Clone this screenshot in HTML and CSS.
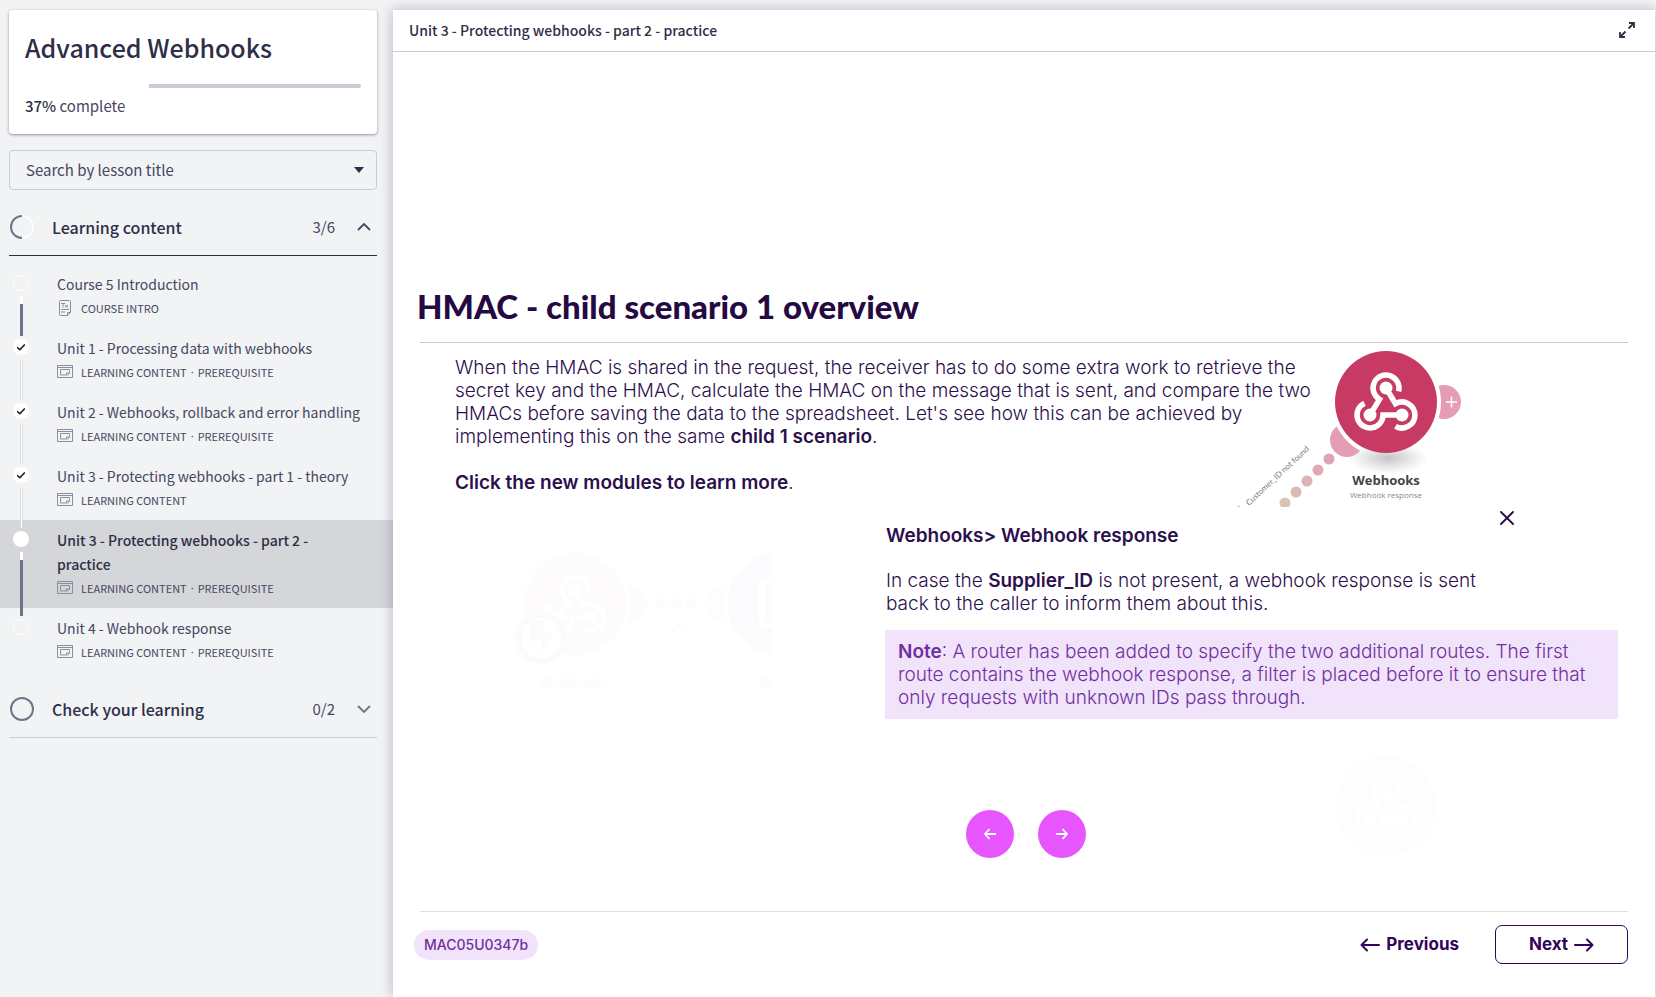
FILE: index.html
```html
<!DOCTYPE html>
<html lang="en">
<head>
<meta charset="utf-8">
<title>Advanced Webhooks</title>
<link rel="stylesheet" href="styles.css">
</head>
<body>
<svg class="defs" aria-hidden="true">
  <symbol id="lesson" viewBox="0 0 16 14">
    <path d="M.5 .5h15v12h-15zM.5 2.500h15M3.500 4.500h9v3.500l-2 2h-7zM9.500 9.500v-1.500h3" fill="none" stroke="currentColor"/>
  </symbol>
  <symbol id="check" viewBox="0 0 16 16">
    <path d="M4.200 8.200l2.600 2.500 5-5.200" fill="none" stroke="#14141f" stroke-width="1.500"/>
  </symbol>
  <symbol id="hook" viewBox="0 0 102 102">
    <g fill="none" stroke="#fff" stroke-width="5.500">
      <path d="M63.600 40.400A13 13 0 1 0 44.500 48.300L35 64"/>
      <path d="M29.500 52.200A13 13 0 1 0 48 64H67"/>
      <path d="M60.500 75.300A13 13 0 1 0 60.500 52.700L51 37"/>
    </g>
    <g fill="#fff"><circle cx="51" cy="37" r="6.500"/><circle cx="35" cy="64" r="6.500"/><circle cx="67" cy="64" r="6.500"/></g>
  </symbol>
</svg>
<aside class="sidebar">
  <section class="card course">
    <h2 class="course-title">Advanced Webhooks</h2>
    <div class="bar" role="progressbar" aria-label="Course progress" aria-valuenow="37"><div class="bar-rest" style="width:63%"></div></div>
    <p class="percent"><b>37%</b> complete</p>
  </section>
  <div class="search">
    <select class="search-box" aria-label="Search by lesson title"><option>Search by lesson title</option></select>
    <svg class="caret" viewBox="0 0 10 6" aria-hidden="true"><path d="M0 0h10L5 6z" fill="#2d2f48"/></svg>
  </div>
  <button class="section open" type="button" aria-expanded="true">
    <svg class="ring" viewBox="0 0 24 24"><circle cx="12" cy="12" r="11" fill="none" stroke="#fff" stroke-width="1.500"/><path d="M12 1a11 11 0 0 0 0 22" fill="none" stroke="#70738a" stroke-width="2"/></svg>
    <span class="section-name">Learning content</span><span class="count">3/6</span>
    <svg class="chevron" viewBox="0 0 14 8"><path d="M1 7l6-6 6 6" fill="none" stroke="#45475f" stroke-width="1.800"/></svg>
  </button>
  <ol class="lessons">
    <li class="lesson pending">
      <div class="track"><span class="dot"></span><span class="link part"></span></div>
      <a class="lesson-link" href="#intro"><span class="name">Course 5 Introduction</span>
      <span class="meta"><svg class="icon" viewBox="0 0 16 16"><path d="M3.500.5h9a1 1 0 0 1 1 1v11l-3 3h-7a1 1 0 0 1-1-1v-13a1 1 0 0 1 1-1zM13.500 12.500h-3v3M4 3.500h4M6 3.500v4M8 5l3 2.500M11 5L8 7.500M4 9.500h8M4 12h4" fill="none" stroke="currentColor"/></svg>COURSE INTRO</span></a>
    </li>
    <li class="lesson">
      <div class="track"><span class="dot"><svg class="tick"><use href="#check"/></svg></span><span class="link"></span></div>
      <a class="lesson-link" href="#unit1"><span class="name">Unit 1 - Processing data with webhooks</span>
      <span class="meta"><svg class="icon"><use href="#lesson"/></svg>LEARNING CONTENT<span class="sep">·</span>PREREQUISITE</span></a>
    </li>
    <li class="lesson">
      <div class="track"><span class="dot"><svg class="tick"><use href="#check"/></svg></span><span class="link"></span></div>
      <a class="lesson-link" href="#unit2"><span class="name">Unit 2 - Webhooks, rollback and error handling</span>
      <span class="meta"><svg class="icon"><use href="#lesson"/></svg>LEARNING CONTENT<span class="sep">·</span>PREREQUISITE</span></a>
    </li>
    <li class="lesson">
      <div class="track"><span class="dot"><svg class="tick"><use href="#check"/></svg></span><span class="link"></span></div>
      <a class="lesson-link" href="#unit3a"><span class="name">Unit 3 - Protecting webhooks - part 1 - theory</span>
      <span class="meta"><svg class="icon"><use href="#lesson"/></svg>LEARNING CONTENT</span></a>
    </li>
    <li class="lesson current">
      <div class="track"><span class="dot"></span><span class="link part"></span></div>
      <a class="lesson-link" href="#unit3b" aria-current="page"><span class="name">Unit 3 - Protecting webhooks - part 2 -<br>practice</span>
      <span class="meta"><svg class="icon"><use href="#lesson"/></svg>LEARNING CONTENT<span class="sep">·</span>PREREQUISITE</span></a>
    </li>
    <li class="lesson pending">
      <div class="track"><span class="dot"></span></div>
      <a class="lesson-link" href="#unit4"><span class="name">Unit 4 - Webhook response</span>
      <span class="meta"><svg class="icon"><use href="#lesson"/></svg>LEARNING CONTENT<span class="sep">·</span>PREREQUISITE</span></a>
    </li>
  </ol>
  <button class="section" type="button" aria-expanded="false">
    <svg class="ring" viewBox="0 0 24 24"><circle cx="12" cy="12" r="11" fill="none" stroke="#70738a" stroke-width="2"/></svg>
    <span class="section-name">Check your learning</span><span class="count">0/2</span>
    <svg class="chevron" viewBox="0 0 14 8"><path d="M1 1l6 6 6-6" fill="none" stroke="#70738a" stroke-width="1.800"/></svg>
  </button>
</aside>
<main class="player">
  <header class="topbar">
    <h2 class="unit">Unit 3 - Protecting webhooks - part 2 - practice</h2>
    <button class="expand" type="button" aria-label="Full screen"><svg viewBox="0 0 16 16"><path d="M9.500 6.500L15 1M10 1h5v5M6.500 9.500L1 15M1 10v5h5" fill="none" stroke="#2d2f48" stroke-width="1.800"/></svg></button>
  </header>
  <article class="slide">
    <h1 class="slide-title">HMAC - child scenario 1 overview</h1>
    <div class="stage">
      <div class="intro">
        <p>When the HMAC is shared in the request, the receiver has to do some extra work to retrieve the<br>secret key and the HMAC, calculate the HMAC on the message that is sent, and compare the two<br>HMACs before saving the data to the spreadsheet. Let's see how this can be achieved by<br>implementing this on the same <b>child 1 scenario</b>.</p>
        <p><b>Click the new modules to learn more</b>.</p>
      </div>
      <svg class="module" viewBox="0 0 230 164">
        <defs><radialGradient id="shade"><stop offset="0" stop-color="#c4c4c4"/><stop offset="1" stop-color="#ccc" stop-opacity="0"/></radialGradient></defs>
        <circle cx="209" cy="59" r="17" fill="#e59db3"/>
        <circle cx="112" cy="97" r="17" fill="#e59db3"/>
        <circle cx="151" cy="59" r="55" fill="#fff"/>
        <ellipse cx="153" cy="115" rx="40" ry="16" fill="url(#shade)"/>
        <circle cx="151" cy="59" r="51" fill="#c73a63"/>
        <use href="#hook" x="100" y="8" width="102" height="102"/>
        <path d="M211 59h11M216.500 53.500v11" stroke="#fff" stroke-width="1.500"/>
        <circle cx="94" cy="116" r="5.500" fill="#e0a3b3"/><circle cx="83" cy="127" r="5.500" fill="#dfaab4"/><circle cx="72" cy="138" r="5.500" fill="#ddb2b5"/><circle cx="61" cy="149" r="5.500" fill="#dbbab4"/><circle cx="50" cy="160" r="5.500" fill="#d8c4b4"/>
        <text class="filter-label" transform="translate(14 163) rotate(-43)">Customer_ID not found</text>
        <path d="M2 164l2-2 1 2z" fill="#c9cf9a"/>
        <text class="module-name" x="151" y="142">Webhooks</text>
        <text class="module-kind" x="151" y="155">Webhook response</text>
      </svg>
    </div>
    <div class="detail">
      <svg class="ghost" viewBox="0 0 262 160" aria-hidden="true">
        <circle cx="120" cy="55" r="17" fill="#fcfcfc"/><circle cx="212" cy="55" r="17" fill="#fdfdfd"/>
        <circle cx="65" cy="55" r="55" fill="#fff"/><circle cx="65" cy="55" r="51" fill="#fefbfc"/>
        <use href="#hook" x="14" y="4" width="102" height="102"/>
        <circle cx="31" cy="89" r="26" fill="#fdfafb"/><circle cx="31" cy="89" r="20" fill="#fff"/><path d="M22 71h14l-4 12h12L30 105l2-13H19z" fill="#fdfafb"/>
        <g fill="#fcfcfc"><circle cx="151" cy="54" r="5"/><circle cx="167" cy="54" r="5"/><circle cx="182" cy="54" r="5"/></g>
        <path d="M162 82l6-6a4 4 0 0 1 4-4l-1 4 4 1a4 4 0 0 1-5 2l-6 5z" fill="#fcfcfc"/>
        <circle cx="269" cy="55" r="55" fill="#fff"/><circle cx="269" cy="55" r="51" fill="#fbfbfe"/>
        <path d="M262 32h-6q-4 0-4 4v36q0 4 4 4h6" fill="none" stroke="#fff" stroke-width="6"/>
        <text class="ghost-name" x="98" y="138">Webhooks</text><text class="ghost-name" x="261" y="138">JS</text>
      </svg>
      <section class="panel">
        <div class="panel-head">
          <h3 class="panel-title">Webhooks&gt; Webhook response</h3>
          <button class="close" type="button" aria-label="Close"><svg viewBox="0 0 14 14"><path d="M1 1l12 12M13 1L1 13" stroke="#240942" stroke-width="1.800" stroke-linecap="round"/></svg></button>
        </div>
        <p class="panel-text">In case the <b>Supplier_ID</b> is not present, a webhook response is sent<br>back to the caller to inform them about this.</p>
        <p class="note"><b>Note</b>: A router has been added to specify the two additional routes. The first<br>route contains the webhook response, a filter is placed before it to ensure that<br>only requests with unknown IDs pass through.</p>
        <div class="steps">
          <button class="step" type="button" aria-label="Back"><svg viewBox="0 0 12 12"><path d="M12 6H1M5.500 1L1 6l4.500 5" fill="none" stroke="#fff" stroke-width="1.800"/></svg></button>
          <button class="step" type="button" aria-label="Forward"><svg viewBox="0 0 12 12"><path d="M0 6h11M6.500 1L11 6l-4.500 5" fill="none" stroke="#fff" stroke-width="1.800"/></svg></button>
          <svg class="ghost-node" viewBox="0 0 102 102" aria-hidden="true"><circle cx="51" cy="51" r="50" fill="#fdfdfd"/><use href="#hook" width="102" height="102"/></svg>
        </div>
      </section>
    </div>
    <footer class="footer">
      <span class="code">MAC05U0347b</span>
      <nav class="pager">
        <button class="prev" type="button"><svg viewBox="0 0 20 14"><path d="M19 7H1.500M7 1.500L1.500 7 7 12.500" fill="none" stroke="currentColor" stroke-width="2" stroke-linecap="round" stroke-linejoin="round"/></svg>Previous</button>
        <button class="next" type="button">Next<svg viewBox="0 0 20 14"><path d="M1 7h17.500M13 1.500L18.500 7 13 12.500" fill="none" stroke="currentColor" stroke-width="2" stroke-linecap="round" stroke-linejoin="round"/></svg></button>
      </nav>
    </footer>
  </article>
</main>
</body>
</html>
```

FILE: styles.css
```css
* { box-sizing: border-box; }
body {
  margin: 0;
  min-height: 100vh;
  display: flex;
  background: #f1f3f5;
  color: #2d2f48;
  font: 15px/24px "Noto Sans CJK SC", "Noto Sans", sans-serif;
}
h1, h2, h3, p, ol { margin: 0; padding: 0; }
button { padding: 0; border: 0; background: none; color: inherit; font: inherit; cursor: pointer; }
svg { display: block; flex: none; }
.defs { position: absolute; width: 0; height: 0; }

.sidebar { flex: none; width: 393px; padding-top: 10px; }
.card { margin: 0 16px 16px 9px; height: 124px; padding: 15px 16px; border-radius: 4px; background: #fff; box-shadow: 0 1px 3px #2d2f4880; }
.course-title { font-size: 25px; line-height: 44px; font-weight: 500; }
.bar { display: flex; justify-content: flex-end; height: 4px; margin: 15px 0 6px; }
.bar-rest { background: #c9ccd6; border-radius: 0 2px 2px 0; }
.percent { font-size: 15px; color: #45475f; }
.percent b { font-weight: 500; color: #2d2f48; }
.search { position: relative; margin: 0 16px 0 9px; }
.search-box { appearance: none; display: block; width: 100%; height: 40px; padding: 0 16px; border: 1px solid #c9ccd6; border-radius: 4px; background: none; color: #45475f; font: inherit; }
.caret { position: absolute; right: 13px; top: 17px; width: 10px; height: 6px; pointer-events: none; }

.section { display: flex; align-items: center; width: 368px; height: 58px; margin: 8px 16px 8px 9px; padding: 0 6px 0 1px; border-bottom: 1px solid #c9ccd6; text-align: left; }
.section.open { border-color: #2d2f48; }
.ring { width: 24px; height: 24px; margin-right: 18px; }
.section-name { flex: 1; font-size: 16px; font-weight: 500; }
.count { margin-right: 22px; font-size: 15px; color: #45475f; }
.chevron { width: 14px; height: 8px; }

.lessons { list-style: none; }
.lesson { display: flex; padding: 8px 16px 8px 13px; color: #45475f; }
.current { background: #d5d6da; }
.track { flex: none; display: flex; flex-direction: column; align-items: center; gap: 5px; width: 16px; margin: 3px 28px -16px 0; }
.dot { flex: none; width: 16px; height: 16px; border-radius: 50%; background: #fff; }
.pending .dot { background: none; border: 1px solid #fff; }
.tick { width: 16px; height: 16px; }
.link { flex: 1; width: 3px; background: #fff; border: solid #d8dadf; border-width: 0 1px; }
.link.part { border: 0; background: linear-gradient(#fff 8px, #70738a 8px); }
.lesson-link { flex: 1; min-width: 0; color: inherit; font-size: 14px; text-decoration: none; }
.name { display: block; }
.current .name { font-weight: 500; color: #2d2f48; }
.meta { display: flex; align-items: center; font-size: 11px; line-height: 24px; }
.sep { margin: 0 4px; font-family: "Noto Sans", sans-serif; }
.icon { width: 16px; height: 16px; margin-right: 8px; color: #8b8d9f; }

.player { flex: 1; min-width: 0; display: flex; flex-direction: column; margin: 10px 1px 0 0; background: #fff; box-shadow: 0 0 12px #2d2f4850; }
.topbar { display: flex; align-items: center; justify-content: space-between; height: 42px; padding: 0 20px 2px 16px; border-bottom: 1px solid #c9ccd6; }
.unit { font-size: 14px; line-height: 24px; font-weight: 500; }
.expand svg { width: 16px; height: 16px; }

.slide { flex: 1; display: flex; flex-direction: column; padding: 228px 27px 0 24px; color: #2c0f4d; font: 300 19px/23px Inter, sans-serif; }
.slide b { font-weight: 600; }
.slide-title { height: 62px; font: 900 33px/52px Lato, sans-serif; color: #240942; }
.stage { display: grid; grid-template-columns: 785px 90px 140px 1fr; margin-left: 3px; border-top: 1px solid #cfc6ca; }
.intro { grid-area: 1 / 1 / 2 / 3; display: flex; flex-direction: column; gap: 23px; padding: 13px 0 0 35px; white-space: nowrap; }
.module { grid-area: 1 / 2 / 2 / 4; width: 230px; height: 164px; margin-left: 30px; }
.filter-label { font: 8px Lato, sans-serif; fill: #777; }
.module-name { font: 700 13px "Open Sans", sans-serif; fill: #444; text-anchor: middle; }
.module-kind { font: 8px "Open Sans", sans-serif; fill: #888; text-anchor: middle; }

.detail { flex: 1; display: flex; gap: 113px; padding: 0 10px 0 93px; }
.ghost { width: 262px; height: 160px; margin-top: 42px; }
.ghost-name { font: 700 13px "Open Sans", sans-serif; fill: #fbfbfb; text-anchor: end; }
.panel { flex: 1; padding-top: 4px; }
.panel-head { display: flex; justify-content: space-between; padding-right: 104px; }
.panel-title { padding: 13px 0 0 1px; font-size: 19px; line-height: 23px; font-weight: 600; }
.close { width: 14px; height: 14px; }
.panel-text { margin: 22px 0 15px 1px; }
.note { padding: 10px 13px; background: #f0e3fa; color: #7030a0; }
.steps { display: flex; align-items: center; gap: 24px; margin: 35px 0 0 81px; }
.step { display: flex; align-items: center; justify-content: center; width: 48px; height: 48px; margin-top: 56px; border-radius: 50%; background: #e755ff; }
.step svg { width: 12px; height: 12px; }
.ghost-node { width: 102px; height: 102px; margin-left: auto; margin-right: 181px; }

.footer { display: flex; align-items: center; justify-content: space-between; height: 86px; margin-left: 3px; padding-bottom: 20px; border-top: 1px solid #e2dbdf; }
.code { margin-left: -6px; padding: 0 10px; border-radius: 15px; background: #f0e3fa; color: #7030a0; font-size: 14px; line-height: 30px; font-weight: 500; }
.pager { display: flex; align-items: center; gap: 36px; color: #32045c; font-size: 17px; font-weight: 700; }
.prev, .next { display: flex; align-items: center; gap: 6px; }
.prev svg, .next svg { width: 20px; height: 14px; }
.next { justify-content: center; width: 133px; height: 39px; border: 1px solid #32045c; border-radius: 7px; }
```
